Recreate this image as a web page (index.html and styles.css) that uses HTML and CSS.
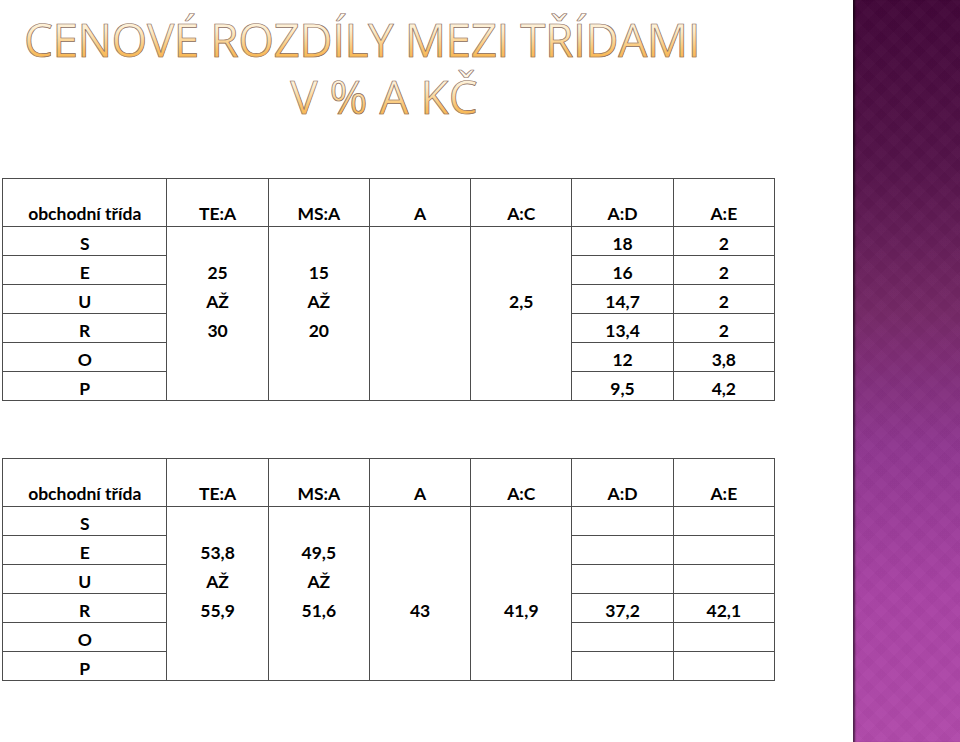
FILE: index.html
```html
<!DOCTYPE html>
<html lang="cs">
<head>
<meta charset="utf-8">
<title>Cenové rozdíly mezi třídami</title>
<link rel="stylesheet" href="styles.css">
</head>
<body>
<div class="page">
  <main class="main">
    <h1 class="title">
      <span class="line1">CENOVÉ ROZDÍLY MEZI TŘÍDAMI</span>
      <span class="line2">V % A KČ</span>
    </h1>

    <table class="grid grid-first">
      <colgroup>
        <col class="c-class"><col class="c-n"><col class="c-n"><col class="c-n"><col class="c-n"><col class="c-n"><col class="c-n">
      </colgroup>
      <thead>
        <tr><th>obchodní třída</th><th>TE:A</th><th>MS:A</th><th>A</th><th>A:C</th><th>A:D</th><th>A:E</th></tr>
      </thead>
      <tbody>
        <tr><td>S</td><td rowspan="6" class="span span-1">25<br>AŽ<br>30</td><td rowspan="6" class="span span-1">15<br>AŽ<br>20</td><td rowspan="6" class="span"></td><td rowspan="6" class="span span-2">2,5</td><td>18</td><td>2</td></tr>
        <tr><td>E</td><td>16</td><td>2</td></tr>
        <tr><td>U</td><td>14,7</td><td>2</td></tr>
        <tr><td>R</td><td>13,4</td><td>2</td></tr>
        <tr><td>O</td><td>12</td><td>3,8</td></tr>
        <tr><td>P</td><td>9,5</td><td>4,2</td></tr>
      </tbody>
    </table>

    <table class="grid grid-second">
      <colgroup>
        <col class="c-class"><col class="c-n"><col class="c-n"><col class="c-n"><col class="c-n"><col class="c-n"><col class="c-n">
      </colgroup>
      <thead>
        <tr><th>obchodní třída</th><th>TE:A</th><th>MS:A</th><th>A</th><th>A:C</th><th>A:D</th><th>A:E</th></tr>
      </thead>
      <tbody>
        <tr><td>S</td><td rowspan="6" class="span span-1">53,8<br>AŽ<br>55,9</td><td rowspan="6" class="span span-1">49,5<br>AŽ<br>51,6</td><td rowspan="6" class="span span-3">43</td><td rowspan="6" class="span span-3">41,9</td><td></td><td></td></tr>
        <tr><td>E</td><td></td><td></td></tr>
        <tr><td>U</td><td></td><td></td></tr>
        <tr><td>R</td><td>37,2</td><td>42,1</td></tr>
        <tr><td>O</td><td></td><td></td></tr>
        <tr><td>P</td><td></td><td></td></tr>
      </tbody>
    </table>
  </main>
  <aside class="strip"></aside>
</div>
</body>
</html>
```

FILE: styles.css
```css
html, body {
  margin: 0;
  padding: 0;
  background: #ffffff;
}

.page {
  display: flex;
  width: 960px;
  height: 742px;
  overflow: hidden;
}

.main {
  width: 853px;
  flex: none;
  padding-top: 11px;
  box-sizing: border-box;
}

.title {
  margin: 0;
  font-family: "Open Sans", "DejaVu Sans", sans-serif;
  font-weight: 400;
  font-size: 46px;
  line-height: 57px;
  height: 167px;
  text-align: center;
  display: flex;
  flex-direction: column;
}

.title span {
  display: block;
  background: linear-gradient(180deg, #fffdf8 0%, #fdebc8 35%, #f9c066 70%, #f6ab3a 100%);
  -webkit-background-clip: text;
  background-clip: text;
  color: transparent;
  -webkit-text-stroke: 0.7px #8a6e66;
}

.line1 {
  width: 724px;
  letter-spacing: -0.5px;
}

.line2 {
  width: 768px;
}

.grid {
  border-collapse: collapse;
  table-layout: fixed;
  width: 773px;
  margin-left: 2px;
  font-family: Lato, "Liberation Sans", sans-serif;
  font-weight: 700;
  font-size: 17.5px;
  color: #000;
}

.grid-second {
  margin-top: 57px;
}

.c-class { width: 164px; }
.c-n { width: 101px; }

.grid th,
.grid td {
  border: 1px solid #4d4d4d;
  padding: 0;
  text-align: center;
}

.grid th {
  height: 45px;
  vertical-align: bottom;
  line-height: 20px;
  padding-bottom: 2px;
}

.grid td {
  height: 22px;
  line-height: 22px;
  padding-top: 6px;
  vertical-align: top;
}

.grid td.span {
  line-height: 29px;
  height: auto;
}

.grid td.span-1 { padding-top: 31px; }
.grid td.span-2 { padding-top: 60px; }
.grid td.span-3 { padding-top: 89px; }

.strip {
  flex: 1;
  background:
    repeating-linear-gradient(45deg, rgba(255,255,255,0.013) 0 9px, rgba(0,0,0,0.013) 9px 18px),
    repeating-linear-gradient(-45deg, rgba(255,255,255,0.013) 0 9px, rgba(0,0,0,0.013) 9px 18px),
    linear-gradient(180deg, #420739 0%, #54134a 22%, #742866 42%, #8f3790 60%, #a843a4 80%, #b04aaa 100%);
  box-shadow: inset 3px 0 2px -1px rgba(0,0,0,0.55);
}
```
